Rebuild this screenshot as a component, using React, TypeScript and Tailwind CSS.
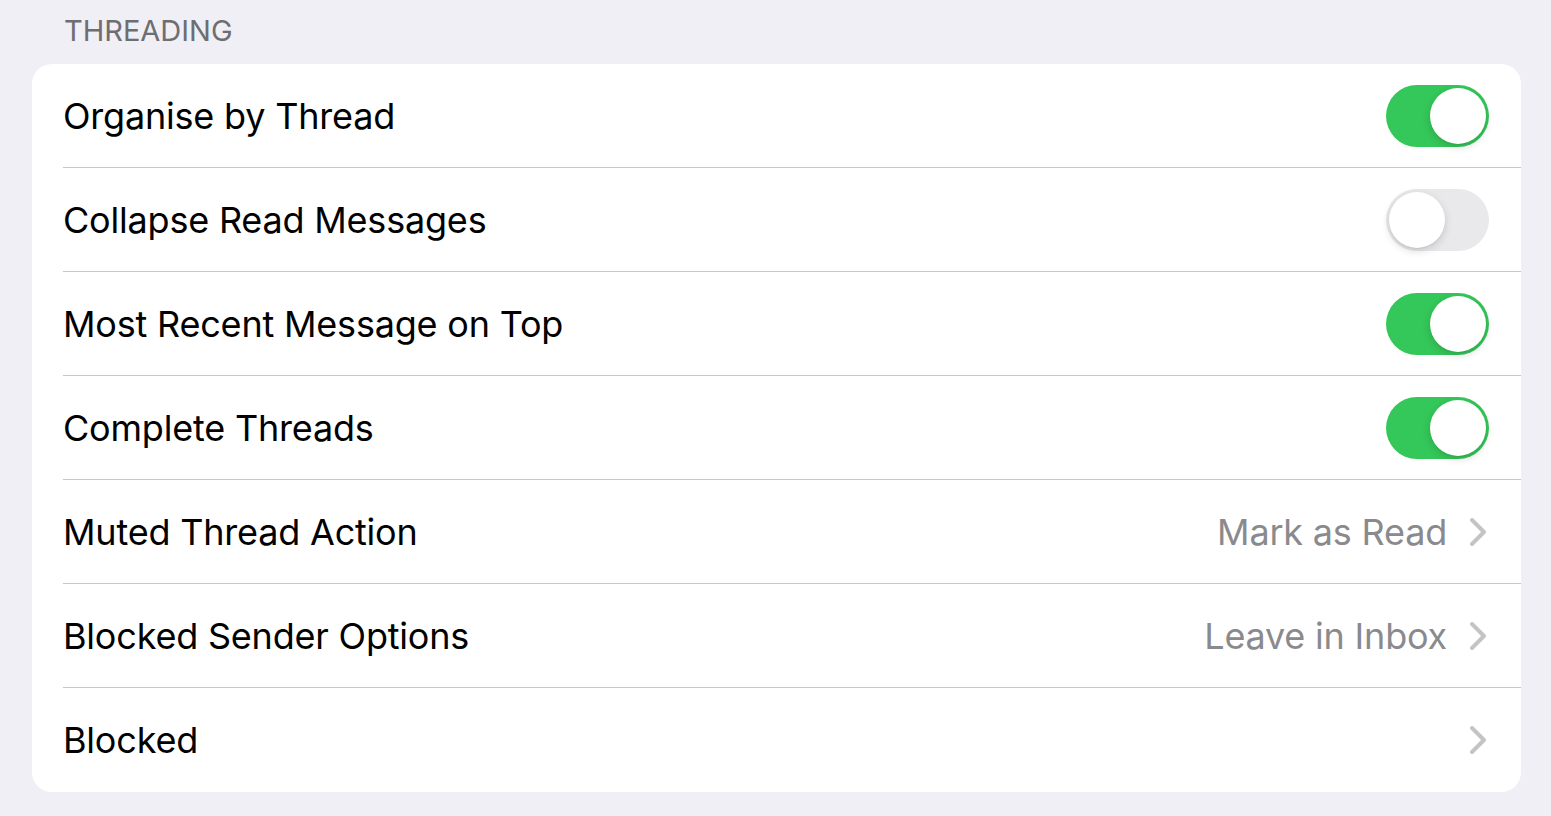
import React from "react";

const font = { fontFamily: "Inter, 'Noto Sans', 'Liberation Sans', sans-serif" };

function Toggle({ on }: { on: boolean }) {
  return (
    <div
      className={`relative w-[103px] h-[62px] rounded-full shrink-0 ${on ? "bg-[#34c759]" : "bg-[#e9e9eb]"}`}
    >
      <div
        className={`absolute top-[3px] w-[56px] h-[56px] rounded-full bg-white shadow-[0_3px_8px_rgba(0,0,0,0.15),0_1px_1px_rgba(0,0,0,0.06)] ${on ? "right-[3px]" : "left-[3px]"}`}
      />
    </div>
  );
}

function Chevron() {
  return (
    <svg width="18" height="30" viewBox="0 0 18 30" className="shrink-0">
      <path d="M3 3 L15 15 L3 27" fill="none" stroke="#c4c4c7" strokeWidth="4" strokeLinecap="round" strokeLinejoin="round" />
    </svg>
  );
}

type Row = { label: string; toggle?: boolean; value?: string; chevron?: boolean };

const rows: Row[] = [
  { label: "Organise by Thread", toggle: true },
  { label: "Collapse Read Messages", toggle: false },
  { label: "Most Recent Message on Top", toggle: true },
  { label: "Complete Threads", toggle: true },
  { label: "Muted Thread Action", value: "Mark as Read", chevron: true },
  { label: "Blocked Sender Options", value: "Leave in Inbox", chevron: true },
  { label: "Blocked", value: "", chevron: true },
];

export default function App() {
  return (
    <div className="w-[1551px] h-[816px] bg-[#f0eff5] overflow-hidden" style={font}>
      <div className="pl-[64px] pt-[13px] h-[64px] text-[29px] leading-[36px] text-[#6d6d72]">
        THREADING
      </div>
      <div className="ml-[32px] mr-[30px] bg-white rounded-[20px] pl-[31px]">
        {rows.map((r, i) => (
          <div
            key={r.label}
            className={`flex items-center h-[104px] pr-[32px] ${i < rows.length - 1 ? "border-b border-[#c8c7cc]" : ""}`}
          >
            <div className="flex-1 text-[36px] text-black tracking-[-0.2px]">{r.label}</div>
            {r.toggle !== undefined && <Toggle on={r.toggle} />}
            {r.chevron && (
              <div className="flex items-center gap-[22px] pr-[2px]">
                {r.value ? <span className="text-[36px] text-[#8a8a8e] tracking-[-0.2px]">{r.value}</span> : null}
                <Chevron />
              </div>
            )}
          </div>
        ))}
      </div>
    </div>
  );
}
